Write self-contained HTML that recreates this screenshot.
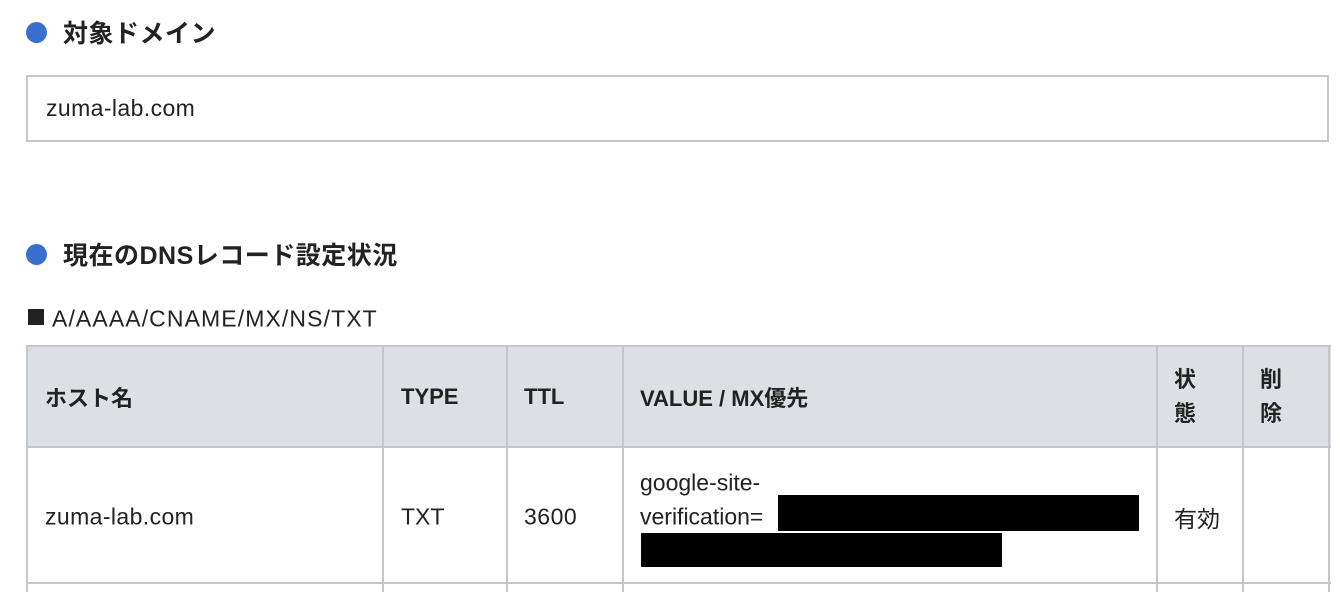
<!DOCTYPE html>
<html><head><meta charset="utf-8"><style>
body{margin:0;background:#fff;font-family:"Liberation Sans","Noto Sans CJK JP",sans-serif;color:#222;width:1340px;height:592px;overflow:hidden;position:relative}
.a{position:absolute;white-space:nowrap}
.h{left:26px;font-size:25px;font-weight:bold;display:flex;align-items:center;letter-spacing:0.5px}
.h i{display:inline-block;width:21px;height:21px;border-radius:50%;background:#3a6fd0;margin-right:16px}
.box{position:absolute;left:26px;top:75px;width:1303px;height:67px;border:2px solid #c4c6c9;box-sizing:border-box;font-size:23px;line-height:63px;padding-left:18px;letter-spacing:0.4px}
.v{position:absolute;width:2px;background:#c4c6c9;top:345px;height:247px}
.hl{position:absolute;left:26px;width:1305px;height:2px;background:#c4c6c9}
.t{font-size:23px;transform:translateY(-50%)}
.th{font-weight:bold;font-size:22px}
.k{position:absolute;background:#000}
</style></head><body>
<div class="a h" style="top:14px"><i></i>対象ドメイン</div>
<div class="box">zuma-lab.com</div>
<div class="a h" style="top:236px"><i></i>現在のDNSレコード設定状況</div>
<div class="a" style="left:28px;top:309px;width:16px;height:16px;background:#222"></div>
<div class="a t" style="left:52px;top:319px;font-size:23px;letter-spacing:1.1px">A/AAAA/CNAME/MX/NS/TXT</div>
<div class="a" style="left:26px;top:345px;width:1305px;height:102px;background:#dcdfe3"></div>
<div class="hl" style="top:345px"></div><div class="hl" style="top:446px"></div><div class="hl" style="top:582px"></div>
<div class="v" style="left:26px"></div><div class="v" style="left:382px"></div><div class="v" style="left:506px"></div><div class="v" style="left:622px"></div><div class="v" style="left:1156px"></div><div class="v" style="left:1242px"></div><div class="v" style="left:1328px"></div>
<div class="a t th" style="left:45px;top:397px">ホスト名</div>
<div class="a t th" style="left:401px;top:397px">TYPE</div>
<div class="a t th" style="left:524px;top:397px">TTL</div>
<div class="a t th" style="left:640px;top:397px">VALUE / MX優先</div>
<div class="a t th" style="left:1174px;top:397px;line-height:34px">状<br>態</div>
<div class="a t th" style="left:1260px;top:397px;line-height:34px">削<br>除</div>
<div class="a t" style="left:45px;top:517px;letter-spacing:0.4px">zuma-lab.com</div>
<div class="a t" style="left:401px;top:517px">TXT</div>
<div class="a t" style="left:524px;top:517px;letter-spacing:0.5px">3600</div>
<div class="a t" style="left:640px;top:483px">google-site-</div>
<div class="a t" style="left:640px;top:517px">verification=</div>
<div class="a t" style="left:1174px;top:517px">有効</div>
<div class="k" style="left:778px;top:495px;width:361px;height:36px"></div>
<div class="k" style="left:641px;top:533px;width:361px;height:34px"></div>
</body></html>
